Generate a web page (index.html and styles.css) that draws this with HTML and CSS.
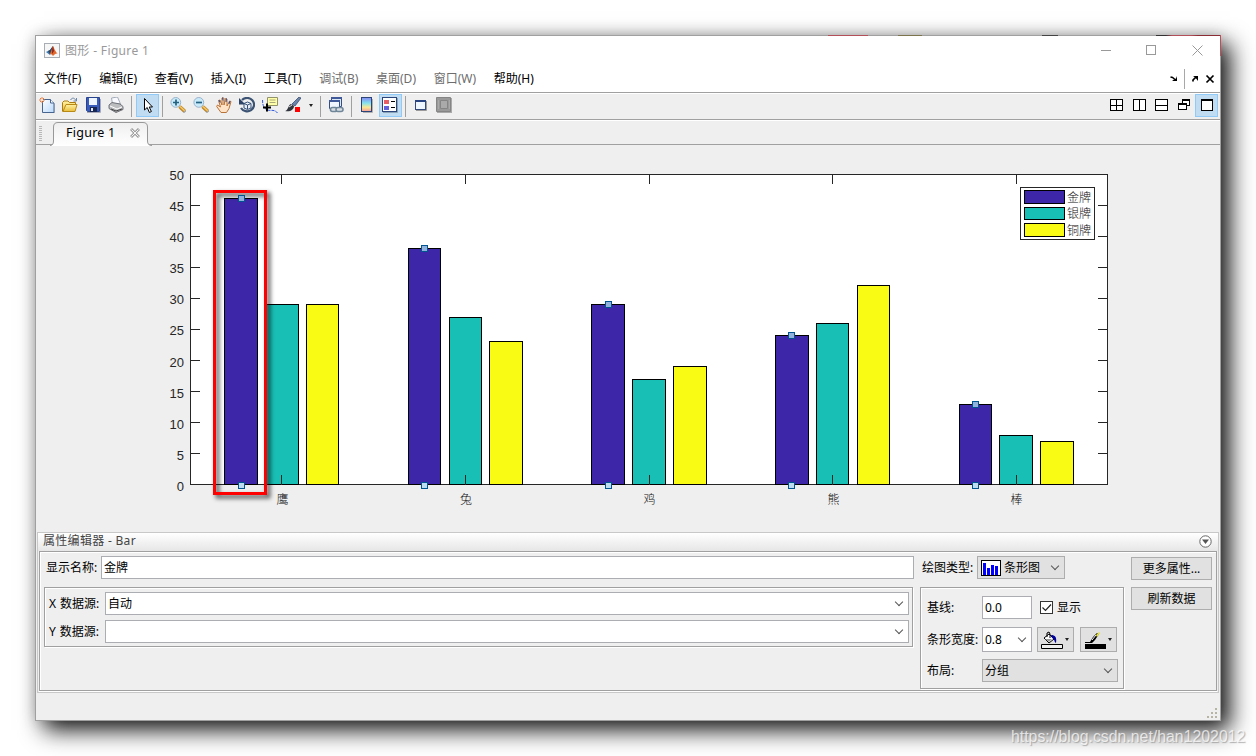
FILE: index.html
```html
<!DOCTYPE html>
<html lang="zh-CN">
<head>
<meta charset="utf-8">
<title>Figure 1</title>
<link rel="stylesheet" href="styles.css">
</head>
<body>
<svg width="0" height="0" class="defs">
  <defs>
    <linearGradient id="paper" x1="0" y1="0" x2="1" y2="1"><stop offset="0" stop-color="#fff"/><stop offset="1" stop-color="#b9d9fb"/></linearGradient>
    <linearGradient id="gold" x1="0" y1="0" x2="0" y2="1"><stop offset="0" stop-color="#fff3a5"/><stop offset="1" stop-color="#e8bd3c"/></linearGradient>
    <linearGradient id="tabfill" x1="0" y1="0" x2="0" y2="1"><stop offset="0" stop-color="#efefef"/><stop offset="1" stop-color="#fff"/></linearGradient>
    <linearGradient id="spectrum" x1="0" y1="0" x2="0" y2="1"><stop offset="0" stop-color="#8587f2"/><stop offset=".4" stop-color="#83e2ee"/><stop offset=".7" stop-color="#fae894"/><stop offset="1" stop-color="#f49a9a"/></linearGradient>
    <filter id="soft" x="-30%" y="-10%" width="170%" height="120%"><feGaussianBlur stdDeviation="2.3"/></filter>
    <g id="lens">
      <path d="M9.5 9.5l5 4.8" stroke="#aaa" stroke-width="3.6" transform="translate(.8 .8)"/>
      <path d="M9.5 9.5l5 4.5" stroke="#c58a24" stroke-width="3.4"/>
      <path d="M10 9.6l4.6 4.2" stroke="#f8ca6a" stroke-width="1.4"/>
      <circle cx="5.8" cy="5.4" r="4.9" fill="#c9eaf9" stroke="#9ab4cc"/>
    </g>
  </defs>
</svg>
<main class="window">
  <div class="edge"></div>
  <header class="titlebar">
    <svg class="logo" width="16" height="15" viewBox="0 0 16 15"><rect x=".5" y=".5" width="15" height="14" fill="#f6f6f6" stroke="#a7adb3"/><path d="M2 9l4-2 3-4-1 6-2 3z" fill="#3b78b4"/><path d="M4 8l2-1 3-4-1 5-2 3z" fill="#274766"/><path d="M6 11l3-8c1 1 2 6 5 8-2-1-3 0-5 2-1-1-1-2-3-2z" fill="#e2672b"/><path d="M9 3l1 5-2 3c0-3 0-5 1-8z" fill="#8f2418"/></svg>
    <span class="caption">图形 - Figure 1</span>
    <svg class="controls" width="102" height="12" viewBox="0 0 102 12" fill="none" stroke="#999"><path d="M0 6.500h10"/><rect x="45.500" y="1.500" width="9" height="9"/><path d="M91.500 1.500l10 10M101.500 1.500l-10 10"/></svg>
  </header>
  <nav class="menubar">
    <span>文件(F)</span><span>编辑(E)</span><span>查看(V)</span><span>插入(I)</span><span>工具(T)</span><span class="off">调试(B)</span><span class="off">桌面(D)</span><span class="off">窗口(W)</span><span>帮助(H)</span>
    <svg class="dock" width="46" height="20" viewBox="0 0 46 20" fill="none"><path d="M14.500 0v20" stroke="#a8a8a8"/><path d="M.5 8l2 .5 2.500 2" stroke="#000" stroke-width="1.500"/><path d="M7 7v5H2l2-1.500 2-1z" fill="#000"/><path d="M23 12.500v-1.500l3-3" stroke="#000" stroke-width="1.700"/><path d="M23 7h5v5l-1.500-2-2-2z" fill="#000"/><path d="M36.500 6.500l7 7M43.500 6.500l-7 7" stroke="#000" stroke-width="1.700"/></svg>
  </nav>
  <div class="toolbar">
    <span class="btn"><svg viewBox="0 0 16 16"><path d="M4 16h12V7" fill="none" stroke="#a9adb8"/><path d="M3.500 2.500h8l3.500 3.500v9.500H3.500z" fill="url(#paper)" stroke="#47658f"/><path d="M11.500 2.500V6H15" fill="#fff" stroke="#47658f"/><path d="M0 3h6M3 0v6M1 1l4 4M5 1l-4 4" stroke="#e38145"/><circle cx="3" cy="3" r="1" fill="#fff"/></svg></span>
    <span class="btn"><svg viewBox="0 0 16 16"><path d="M.5 14.500v-9l1.500-1.500h4l1.500 1.500h6v3" fill="url(#gold)" stroke="#ac7c10"/><path d="M1 14.500l3-7h11l-2 7z" fill="url(#gold)" stroke="#b98916"/><path d="M8.500 3c2-3 4-2 5.500.5m.5-2.500v3h-3" fill="none" stroke="#6b85a5"/></svg></span>
    <span class="btn"><svg viewBox="0 0 16 16"><path d="M2 15.500h13.500V2" fill="none" stroke="#aab"/><path d="M1.500.5h13v14h-12l-1-1z" fill="#395cba" stroke="#27438e"/><path d="M4 1h8v7H4z" fill="#eef5ff"/><path d="M5 10h7v5H5z" fill="#172551"/><path d="M6 11h2v3H6z" fill="#e3e9f8"/></svg></span>
    <span class="btn"><svg viewBox="0 0 16 16"><path d="M4.500 7l-1-6 6-1 3 7z" fill="#f8faff" stroke="#a5adba"/><path d="M1 8l3-2.500 8 1.500 3 2.500v3l-7 3-7-4z" fill="#bcbdbf" stroke="#6f7278"/><path d="M2 9l7 3 5-2" fill="none" stroke="#fff"/><path d="M3 12l5 2 6-2" fill="none" stroke="#444"/></svg></span>
    <i class="sep"></i>
    <span class="btn on"><svg viewBox="0 0 16 16"><path d="M5.500 1.500v11.500l2.700-2.500 2.200 5 2-1-2.200-4.500h3.300z" fill="#fff" stroke="#000"/></svg></span>
    <i class="sep"></i>
    <span class="btn"><svg viewBox="0 0 16 16"><use href="#lens"/><path d="M3 5.500h6M6 2.500v6" stroke="#246080" stroke-width="1.700"/></svg></span>
    <span class="btn"><svg viewBox="0 0 16 16"><use href="#lens"/><path d="M3 5.500h6" stroke="#246080" stroke-width="1.700"/></svg></span>
    <span class="btn"><svg viewBox="0 0 16 16"><path d="M5 15.500L.7 9.500 1.500 8l3 2-2-6.500 1.500-.5 2 5V1h2v7l1.500-6.500 1.500.5v7l2.500-5 1.500.5-2 7-2.500 4z" fill="#ffe3c6" stroke="#b87339"/><path d="M3 3l1 2.500M6.500.5l.5 3M10.500 1.500L10 5M14 4l-1 3" stroke="#364f92"/></svg></span>
    <span class="btn"><svg viewBox="0 0 16 16" fill="none"><path d="M3 3a7 6.700 0 1 1-1 8" stroke="#3c5373" stroke-width="2.200"/><path d="M0 1v6.500h6.500z" fill="#2c4365"/><path d="M5 6.500L8.500 5 12 6.500V11l-3.500 1.500L5 11zM5 6.500L8.500 8 12 6.500M8.500 8v4" stroke="#355078" fill="#e8eef6"/></svg></span>
    <span class="btn"><svg viewBox="0 0 16 16" fill="none"><path d="M.5 3c0 6 2 9 5 10s7-1 10 3" stroke="#3159d8" stroke-dasharray="3 1"/><path d="M5.500.5h10v8h-10z" fill="#ffffa9" stroke="#93936b"/><path d="M7.500 3h6M7.500 5.500h6" stroke="#aaa879"/><path d="M1 10.500h8M5 6.500v8" stroke="#000" stroke-width="2"/></svg></span>
    <span class="btn"><svg viewBox="0 0 16 16"><path d="M7 7l7-7 2 1-6 8z" fill="#6b84ab" stroke="#1b2b53" stroke-width=".6"/><path d="M0 14c3 0 3-6 6-7l3 2c0 4-4 6-9 5z" fill="#30343d"/><path d="M4 10l3-2" stroke="#ddd"/><path d="M10 10h5v5h-5z" fill="#f00"/></svg></span>
    <span class="more"></span>
    <i class="sep"></i>
    <span class="btn"><svg viewBox="0 0 16 16"><path d="M3.500.5h10v9h-10z" fill="#dae8f7" stroke="#344d85"/><path d="M1.500 3.500h10v8h-10z" fill="#eff6ff" stroke="#344d85"/><path d="M1 3h11v2H1zM3 0h11v2H3z" fill="#405998"/><g fill="#d8dee4" stroke="#6f8799" stroke-width="1.600"><rect x="2.500" y="10.500" width="7" height="4" rx="2"/><rect x="8" y="10.500" width="7" height="4" rx="2"/></g></svg></span>
    <i class="sep"></i>
    <span class="btn"><svg viewBox="0 0 16 16"><path d="M4 15.500h9.500V2" fill="none" stroke="#b1b1b4"/><rect x="2.500" y=".5" width="10" height="14" fill="url(#spectrum)" stroke="#2d4478"/></svg></span>
    <span class="btn on"><svg viewBox="0 0 16 16"><rect x=".5" y=".5" width="14" height="14" fill="#fff" stroke="#2b447a"/><path d="M1 15.500h14.500V1" fill="none" stroke="#8ba4b8"/><path d="M2 3h5v4H2z" fill="#e75f65"/><path d="M2 9h5v4H2z" fill="#6262dd"/><path d="M9 4.500h4M9 10.500h4" stroke="#000"/></svg></span>
    <i class="sep"></i>
    <span class="btn"><svg viewBox="0 0 16 16"><path d="M3 13.500h10.500V4" fill="none" stroke="#999"/><rect x="2.500" y="3.500" width="10" height="9" fill="#edf6ff" stroke="#33497b"/><path d="M2 3h11v2H2z" fill="#284382"/></svg></span>
    <span class="btn"><svg viewBox="0 0 16 16"><path d="M1 1h15v15H1z" fill="#aaa"/><path d="M.5.500h14v14H.500z" fill="#999" stroke="#858585"/><path d="M4.500 3.500h7v8h-7z" fill="#aaa" stroke="#858585"/><path d="M2 3h1v9H2zM13 3h1v9h-1z" fill="#aaa"/></svg></span>
    <span class="layouts">
      <span class="btn"><svg viewBox="0 0 16 16"><path class="pane" d="M2.500 2.500h12v11h-12zM8.500 2.500v11M2.500 8.500h12"/></svg></span>
      <span class="btn"><svg viewBox="0 0 16 16"><path class="pane" d="M2.500 2.500h12v11h-12zM8.500 2.500v11"/></svg></span>
      <span class="btn"><svg viewBox="0 0 16 16"><path class="pane" d="M2.500 2.500h12v11h-12zM2.500 8.500h12"/></svg></span>
      <span class="btn"><svg viewBox="0 0 16 16"><path class="pane" d="M6.500 2.500h7v6h-7zM6 3.500h8"/><path class="pane" d="M2.500 6.500h8v6h-8zM2 7.500h9"/></svg></span>
      <span class="btn on"><svg viewBox="0 0 16 16"><path class="pane" d="M3.500 2.500h11v11h-11zM3 3.500h12"/></svg></span>
    </span>
  </div>
  <div class="tabs">
    <i class="grip"></i>
    <div class="tab">
      <svg class="tab-shape" width="102" height="24" viewBox="0 0 102 24"><path d="M0 23.500Q3.500 23.500 3.500 19V5Q3.500.5 8 .5H93Q97.500.5 97.500 5V19Q97.500 23.500 102 23.500V24H0z" fill="url(#tabfill)"/><path d="M0 23.500Q3.500 23.500 3.500 19V5Q3.500.5 8 .5H93Q97.500.5 97.500 5V19Q97.500 23.500 102 23.500" fill="none" stroke="#989898"/></svg>
      <span>Figure 1</span><svg width="10" height="10" viewBox="0 0 10 10"><path d="M1 1l8 8M9 1l-8 8" stroke="#a2a2a2" stroke-width="3"/><path d="M1.500 1.500l7 7M8.500 1.500l-7 7" stroke="#f6f6f6"/></svg>
    </div>
  </div>
  <svg class="chart" width="1184" height="387" viewBox="36 145 1184 387">
    <rect x="190.500" y="174.500" width="917" height="310" fill="#fff" stroke="#262626"/>
    <g stroke="#000">
      <g fill="#3e26a8"><rect x="224.500" y="198.500" width="33" height="286"/><rect x="408.500" y="248.500" width="32" height="236"/><rect x="591.500" y="304.500" width="33" height="180"/><rect x="775.500" y="335.500" width="33" height="149"/><rect x="959.500" y="404.500" width="32" height="80"/></g>
      <g fill="#18bfb5"><rect x="265.500" y="304.500" width="33" height="180"/><rect x="449.500" y="317.500" width="32" height="167"/><rect x="632.500" y="379.500" width="33" height="105"/><rect x="816.500" y="323.500" width="32" height="161"/><rect x="999.500" y="435.500" width="33" height="49"/></g>
      <g fill="#f9fb15"><rect x="306.500" y="304.500" width="32" height="180"/><rect x="489.500" y="341.500" width="33" height="143"/><rect x="673.500" y="366.500" width="33" height="118"/><rect x="857.500" y="285.500" width="32" height="199"/><rect x="1040.500" y="441.500" width="33" height="43"/></g>
    </g>
    <g stroke="#262626" fill="none">
      <path d="M281.500 174v10M465.500 174v10M649.500 174v10M832.500 174v10M1016.500 174v10M281.500 475v10M465.500 475v10M649.500 475v10M832.500 475v10M1016.500 475v10"/>
      <path d="M190 205.500h10M190 236.500h10M190 267.500h10M190 298.500h10M190 329.500h10M190 360.500h10M190 391.500h10M190 422.500h10M190 453.500h10"/>
      <path d="M1098 205.500h10M1098 236.500h10M1098 267.500h10M1098 298.500h10M1098 329.500h10M1098 360.500h10M1098 391.500h10M1098 422.500h10M1098 453.500h10"/>
    </g>
    <g class="ticks">
      <text x="184" y="180">50</text><text x="184" y="211">45</text><text x="184" y="242">40</text><text x="184" y="273">35</text><text x="184" y="304">30</text><text x="184" y="335">25</text><text x="184" y="367">20</text><text x="184" y="398">15</text><text x="184" y="429">10</text><text x="184" y="460">5</text><text x="184" y="491">0</text>
    </g>
    <g class="names"><text x="282.500" y="504">鹰</text><text x="466" y="504">兔</text><text x="649.500" y="504">鸡</text><text x="833.500" y="504">熊</text><text x="1016.500" y="504">棒</text></g>
    <rect x="1020.500" y="187.500" width="74" height="52" fill="#fff" stroke="#262626"/>
    <g stroke="#000"><rect x="1024.500" y="190.500" width="40" height="13" fill="#3e26a8"/><rect x="1024.500" y="207.500" width="40" height="12" fill="#18bfb5"/><rect x="1024.500" y="223.500" width="40" height="13" fill="#f9fb15"/></g>
    <g class="key"><text x="1067" y="202">金牌</text><text x="1067" y="218">银牌</text><text x="1067" y="235">铜牌</text></g>
    <rect x="217.500" y="194.500" width="51" height="302" fill="none" stroke="#000" stroke-opacity=".6" stroke-width="4" filter="url(#soft)"/>
    <rect x="214.500" y="191.500" width="51" height="302" fill="none" stroke="#f00" stroke-width="3"/>
    <g stroke="#00548f" fill="#91b2dc"><rect x="238.500" y="195.500" width="6" height="6"/><rect x="421.500" y="245.500" width="6" height="6"/><rect x="605.500" y="301.500" width="6" height="6"/><rect x="788.500" y="332.500" width="6" height="6"/><rect x="972.500" y="401.500" width="6" height="6"/></g>
    <g stroke="#00548f" fill="#bddcf0"><rect x="238.500" y="482.500" width="6" height="6"/><rect x="421.500" y="482.500" width="6" height="6"/><rect x="605.500" y="482.500" width="6" height="6"/><rect x="788.500" y="482.500" width="6" height="6"/><rect x="972.500" y="482.500" width="6" height="6"/></g>
  </svg>
  <section class="editor">
    <div class="editor-head"><span>属性编辑器 - Bar</span><svg width="13" height="13" viewBox="0 0 13 13"><circle cx="6.500" cy="6.500" r="5.700" fill="#fff" stroke="#666"/><path d="M3 4.500h7L6.500 9z" fill="#555"/></svg></div>
    <div class="editor-body">
      <div class="sources">
        <div class="row name-row"><label>显示名称:</label><span class="field">金牌</span></div>
        <div class="group source-group">
          <div class="row"><label>X 数据源:</label><span class="field">自动<i class="chev"></i></span></div>
          <div class="row"><label>Y 数据源:</label><span class="field"><i class="chev"></i></span></div>
        </div>
      </div>
      <div class="plot">
        <div class="row type-row"><label>绘图类型:</label><span class="field grey type"><svg width="20" height="16" viewBox="0 0 20 16"><rect x=".5" y=".5" width="19" height="15" fill="#fff" stroke="#000"/><path d="M2 3h3v12H2zM6 8h3v7H6zM10 5h3v10h-3zM14 6h3v9h-3z" fill="#00f"/></svg>条形图<i class="chev"></i></span></div>
        <div class="group bar-group">
          <div class="row base-row"><label>基线:</label><span class="field short">0.0</span><svg class="check" width="13" height="13" viewBox="0 0 13 13"><rect x=".5" y=".5" width="12" height="12" fill="#fff" stroke="#333"/><path d="M2.500 6.500l3 3 5.500-6" fill="none" stroke="#222" stroke-width="1.200"/></svg><span>显示</span></div>
          <div class="row width-row"><label>条形宽度:</label><span class="field short">0.8<i class="chev"></i></span>
            <span class="color"><svg width="23" height="18" viewBox="0 0 23 18"><path d="M3 7l5-4 5 5-5 4z" fill="#fff" stroke="#000"/><path d="M6 6V2l2-1 1 2v4" fill="none" stroke="#000"/><path d="M4 8l7 0-3 3z" fill="#999"/><path d="M10 4c4 0 6 2 5 8-2-1-1-4-4-5z" fill="#00009b"/><path d="M.5 13.500h21v4H.500z" fill="#efefef" stroke="#000"/></svg></span>
            <span class="color"><svg width="23" height="18" viewBox="0 0 23 18"><path d="M1 11h5l3-5 4-4 2 1-4 6-3 3H1z" fill="#000"/><path d="M12 4l3-3 1 1-3 4z" fill="#e9e63b"/><path d="M8 9l4-5" stroke="#fff"/><path d="M1 13h21v5H1z" fill="#000"/></svg></span>
          </div>
          <div class="row layout-row"><label>布局:</label><span class="field grey">分组<i class="chev"></i></span></div>
        </div>
      </div>
      <div class="actions"><span class="action">更多属性...</span><span class="action">刷新数据</span></div>
    </div>
  </section>
  <footer class="status"><svg width="12" height="12" viewBox="0 0 12 12" fill="#b8b4a4"><path d="M8 0h2v2H8zM4 4h2v2H4zM8 4h2v2H8zM0 8h2v2H0zM4 8h2v2H4zM8 8h2v2H8z"/></svg></footer>
</main>
<div class="watermark">https://blog.csdn.net/han1202012</div>
</body>
</html>
```
FILE: styles.css
```css
* { box-sizing: border-box; }
body {
  margin: 0;
  width: 1256px;
  height: 756px;
  padding: 35px;
  overflow: hidden;
  position: relative;
  background: #fff;
  color: #000;
  font: 12px/16px "Noto Sans", "Noto Sans CJK SC", sans-serif;
}
.defs { position: absolute; }
.window {
  position: relative;
  width: 1186px;
  height: 686px;
  display: flex;
  flex-direction: column;
  border: 1px solid #a0a0a0;
  background: #efefef;
  box-shadow: 9px 9px 22px rgba(0, 0, 0, .92), 0 0 14px rgba(0, 0, 0, .12);
}
.edge {
  position: absolute;
  inset: -1px -1px auto auto;
  width: 425px;
  height: 1px;
  background: linear-gradient(90deg, transparent 32px, #b34f58 32px 72px, transparent 72px 102px, #7c744c 102px 126px, transparent 126px 246px, #444 246px 262px, transparent 262px 360px, #333 360px 370px, #b34f58 376px 395px, #8b2c35 402px);
}
.edge::after {
  content: "";
  position: absolute;
  right: 0;
  top: 0;
  width: 1px;
  height: 21px;
  background: #bb5058;
}
svg { display: block; flex: none; }

.titlebar {
  height: 29px;
  display: flex;
  align-items: center;
  gap: 5px;
  padding: 0 17px 0 8px;
  background: #fff;
  color: #999;
}
.caption { letter-spacing: .35px; }
.controls { margin: -1px 0 0 auto; }

.menubar {
  height: 28px;
  display: flex;
  align-items: center;
  gap: 17.700px;
  padding: 0 4px 0 8px;
  background: #fff;
  border-bottom: 1px solid #a0a0a0;
  white-space: nowrap;
}
.off { color: #6d6d6d; }
.dock { margin-left: auto; }

.toolbar {
  height: 27px;
  display: flex;
  border-top: 1px solid #fff;
  border-bottom: 1px solid #a0a0a0;
}
.btn {
  width: 23px;
  height: 23px;
  flex: none;
  padding: 2px 0 0 2px;
  border: 1px solid transparent;
}
.btn svg { width: 16px; height: 16px; }
.btn.on { border-color: #91c9f7; background: #c0dcf3; }
.sep { width: 8px; height: 21px; flex: none; margin-top: 2px; background: linear-gradient(90deg, transparent 3px, #a0a0a0 3px 4px, transparent 4px); }
.more { width: 12px; height: 23px; display: grid; place-items: center; }
.more::after, .color::after {
  content: "";
  border: 2.500px solid transparent;
  border-top: 3px solid #222;
  border-bottom: 0;
}
.layouts { display: flex; margin-left: auto; padding-right: 2px; }
.layouts .btn:not(.on) { width: 22.500px; }
.pane { fill: #fff; stroke: #000; shape-rendering: crispEdges; }

.tabs {
  height: 25px;
  display: flex;
  align-items: flex-start;
  padding: 0 0 0 3px;
  border-top: 1px solid #fff;
  border-bottom: 1px solid #a0a0a0;
}
.grip { width: 3px; height: 15px; margin: 5px 11px 0 0; background: repeating-linear-gradient(#b8b8b8 0 1px, transparent 1px 2px); }
.tab {
  position: relative;
  width: 95px;
  height: 24px;
  display: flex;
  align-items: center;
  justify-content: space-between;
  padding: 0 8px 0 13px;
  font-size: 12.500px;
  letter-spacing: .25px;
}
.tab > * { position: relative; }
.tab .tab-shape { position: absolute; left: -3px; top: 1px; }

.ticks { font: 13px "Liberation Sans", Arial, sans-serif; fill: #262626; text-anchor: end; }
.names, .key { font: 300 12px "Noto Sans CJK SC", sans-serif; fill: #111; }
.names { text-anchor: middle; }

.editor {
  height: 161px;
  margin: 0 1px;
  padding: 0 1px 1px;
  border: 1px solid #c8c8c8;
}
.editor-head {
  height: 18px;
  margin: 0 -1px;
  display: flex;
  align-items: center;
  justify-content: space-between;
  padding: 0 6px 2px 5px;
  background: linear-gradient(#fff, #e6e6e6);
  color: #444;
  letter-spacing: .3px;
}
.editor-body {
  height: 140px;
  display: grid;
  grid-template-columns: 870px 205px 81px;
  column-gap: 6px;
  padding: 4px 4px 0;
  border: 1px solid #a0a0a0;
  box-shadow: inset 1px 1px #fff, 0 1px #fff;
}
.row { display: flex; align-items: center; white-space: nowrap; }
.row label { flex: none; }
.field {
  flex: 1;
  height: 23px;
  display: flex;
  align-items: center;
  padding: 0 6px 0 2px;
  border: 1px solid #abadb3;
  background: #fff;
}
.grey { background: #e1e1e1; border-color: #adadad; }
.chev {
  width: 6px;
  height: 6px;
  margin: -4px 0 0 auto;
  border: solid #555;
  border-width: 0 1px 1px 0;
  transform: rotate(45deg);
}
.group {
  border: 1px solid #a0a0a0;
  box-shadow: 1px 1px #fff, inset 1px 1px #fff;
}
.name-row { padding-left: 2px; }
.name-row label { width: 55px; }
.source-group { width: 869px; height: 60px; margin-top: 8px; padding: 4px 3px 0 4px; display: grid; align-content: start; gap: 5px; }
.source-group label { width: 56px; word-spacing: .8px; }
.type-row { padding-left: 2px; }
.type-row label { width: 55px; }
.type { flex: none; width: 88px; padding-left: 3px; gap: 3px; }
.bar-group { width: 204px; height: 102px; margin-top: 8px; padding: 8px 5px 0 6px; }
.bar-group label { width: 55px; }
.short { flex: none; width: 50px; }
.check { margin: 0 4px 0 8px; }
.width-row { margin-top: 8px; }
.width-row .field { height: 25px; margin-right: 5px; }
.layout-row { margin-top: 7px; }
.color {
  width: 37px;
  height: 25px;
  display: flex;
  align-items: center;
  justify-content: space-between;
  padding: 0 4px 0 3px;
  border: 1px solid #adadad;
  background: #e1e1e1;
}
.color + .color { margin-left: 6px; }
.actions { display: grid; align-content: start; gap: 7px; padding-top: 1px; }
.action {
  height: 23px;
  display: grid;
  place-items: center;
  border: 1px solid #adadad;
  background: #e1e1e1;
}

.status { flex: 1; display: flex; justify-content: flex-end; align-items: flex-end; padding: 0 1px 0 0; }
.watermark {
  position: absolute;
  left: 1011px;
  top: 728px;
  font: 15.850px/18px "Liberation Sans", Arial, sans-serif;
  color: rgba(255, 255, 255, .72);
  text-shadow: 1px 1px 1px rgba(120, 120, 120, .55);
  white-space: nowrap;
}
```
